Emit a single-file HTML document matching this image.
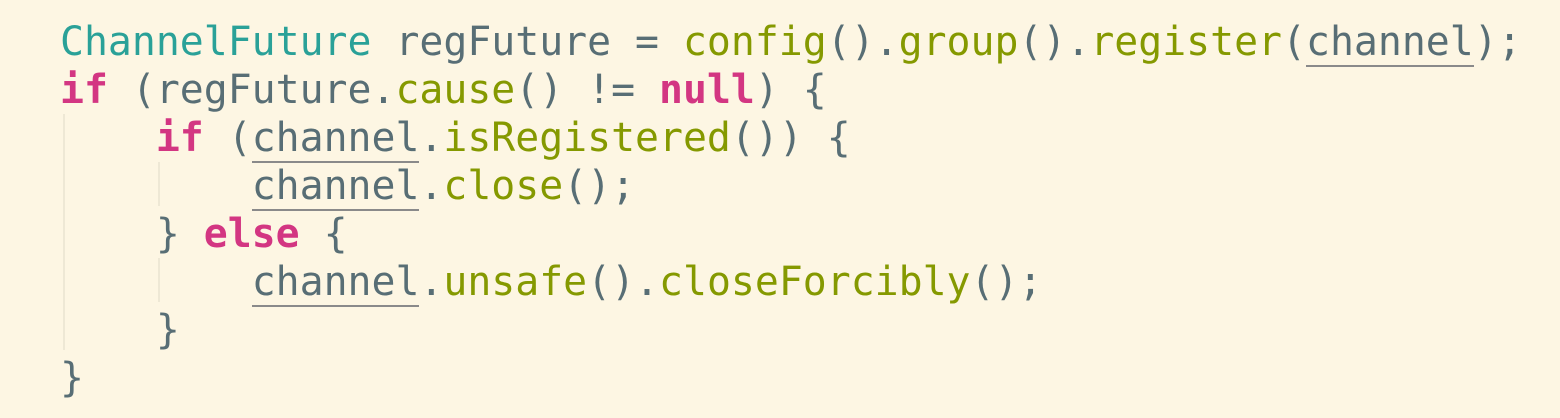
<html><head><style>
body{margin:0;background:#fdf6e3;width:1560px;height:418px;overflow:hidden;position:relative}
pre{position:absolute;left:60px;top:18px;margin:0;font-family:"DejaVu Sans Mono",monospace;font-size:39.8px;line-height:48px;color:#586e75}
.t{color:#2aa198}.f{color:#859900}.k{color:#d33682;font-weight:bold}
u{text-decoration:none;border-bottom:2px solid #8a8a8a;padding-bottom:0}
.g{position:absolute;width:2px;background:#eee8d5}
</style></head><body>
<div class="g" style="left:63px;top:114px;height:236px"></div>
<div class="g" style="left:158px;top:162px;height:44px"></div>
<div class="g" style="left:158px;top:258px;height:44px"></div>
<pre><span class="t">ChannelFuture</span> regFuture = <span class="f">config</span>().<span class="f">group</span>().<span class="f">register</span>(<u>channel</u>);
<span class="k">if</span> (regFuture.<span class="f">cause</span>() != <span class="k">null</span>) {
    <span class="k">if</span> (<u>channel</u>.<span class="f">isRegistered</span>()) {
        <u>channel</u>.<span class="f">close</span>();
    } <span class="k">else</span> {
        <u>channel</u>.<span class="f">unsafe</span>().<span class="f">closeForcibly</span>();
    }
}</pre>
</body></html>
